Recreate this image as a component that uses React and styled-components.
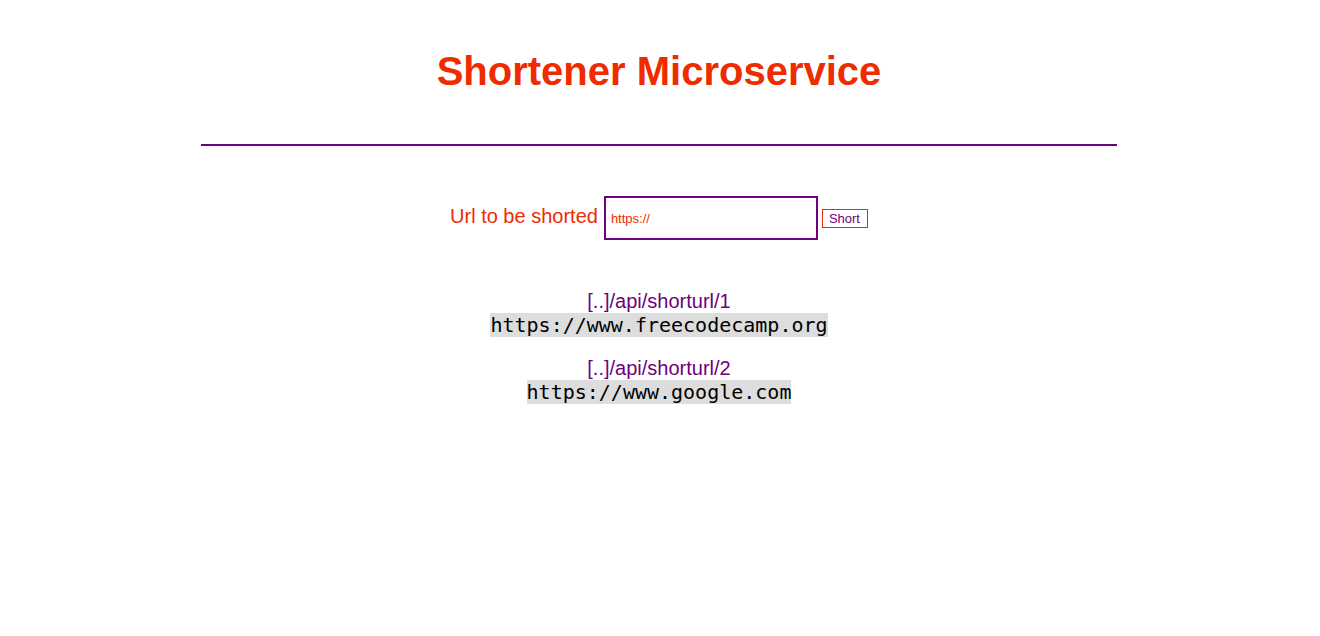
import styled, { createGlobalStyle } from "styled-components";

const GlobalStyle = createGlobalStyle`
  body {
    margin: 8px;
    background: #fff;
    font-family: "Liberation Sans", Arial, sans-serif;
  }
`;

const links = [
  { id: 1, url: "https://www.freecodecamp.org" },
  { id: 2, url: "https://www.google.com" },
];

const App = () => {
  return (
    <>
      <GlobalStyle />
      <Page>
        <Title>Shortener Microservice</Title>
        <Divider />
        <Form onSubmit={(e) => e.preventDefault()}>
          <Label htmlFor="url">Url to be shorted</Label>
          <UrlInput id="url" defaultValue="https://" />
          <ShortButton type="submit">Short</ShortButton>
        </Form>
        <List>
          {links.map((link) => (
            <Item key={link.id}>
              <ShortLink href="#">[..]/api/shorturl/{link.id}</ShortLink>
              <Original>{link.url}</Original>
            </Item>
          ))}
        </List>
      </Page>
    </>
  );
};

export default App;

const Page = styled.div`
  display: flex;
  flex-direction: column;
  align-items: center;
  text-align: center;
  padding-right: 2px;
`;

const Title = styled.h1`
  margin: 40px 0 0;
  font-size: 40px;
  line-height: 46px;
  font-weight: bold;
  color: #ef2b00;
`;

const Divider = styled.hr`
  width: 916px;
  max-width: 100%;
  margin: 50px 0 0;
  border: none;
  border-top: 2px solid #6d0080;
`;

const Form = styled.form`
  display: flex;
  align-items: center;
  gap: 4px;
  margin-top: 50px;
`;

const Label = styled.label`
  font-size: 20px;
  color: #ef2b00;
  margin-right: 2px;
  margin-top: -4px;
`;

const UrlInput = styled.input`
  width: 214px;
  height: 44px;
  box-sizing: border-box;
  border: 2px solid #6d0080;
  padding: 0 5px;
  font-family: "Liberation Sans", Arial, sans-serif;
  font-size: 13px;
  color: #ef2b00;
  outline: none;
`;

const ShortButton = styled.button`
  height: 19px;
  padding: 0 7px 0 6px;
  border: 1px solid #ef2b00;
  background: #fff;
  color: #6d0080;
  font-family: "Liberation Sans", Arial, sans-serif;
  font-size: 13px;
  line-height: 17px;
  cursor: pointer;
`;

const List = styled.div`
  display: flex;
  flex-direction: column;
  align-items: center;
  gap: 20px;
  margin-top: 50px;
`;

const Item = styled.div`
  display: flex;
  flex-direction: column;
  align-items: center;
`;

const ShortLink = styled.a`
  font-size: 20px;
  line-height: 23px;
  color: #6d0080;
  text-decoration: none;
`;

const Original = styled.code`
  font-family: "DejaVu Sans Mono", monospace;
  font-size: 20px;
  line-height: 24px;
  background: #dddddd;
  color: #000;
`;
